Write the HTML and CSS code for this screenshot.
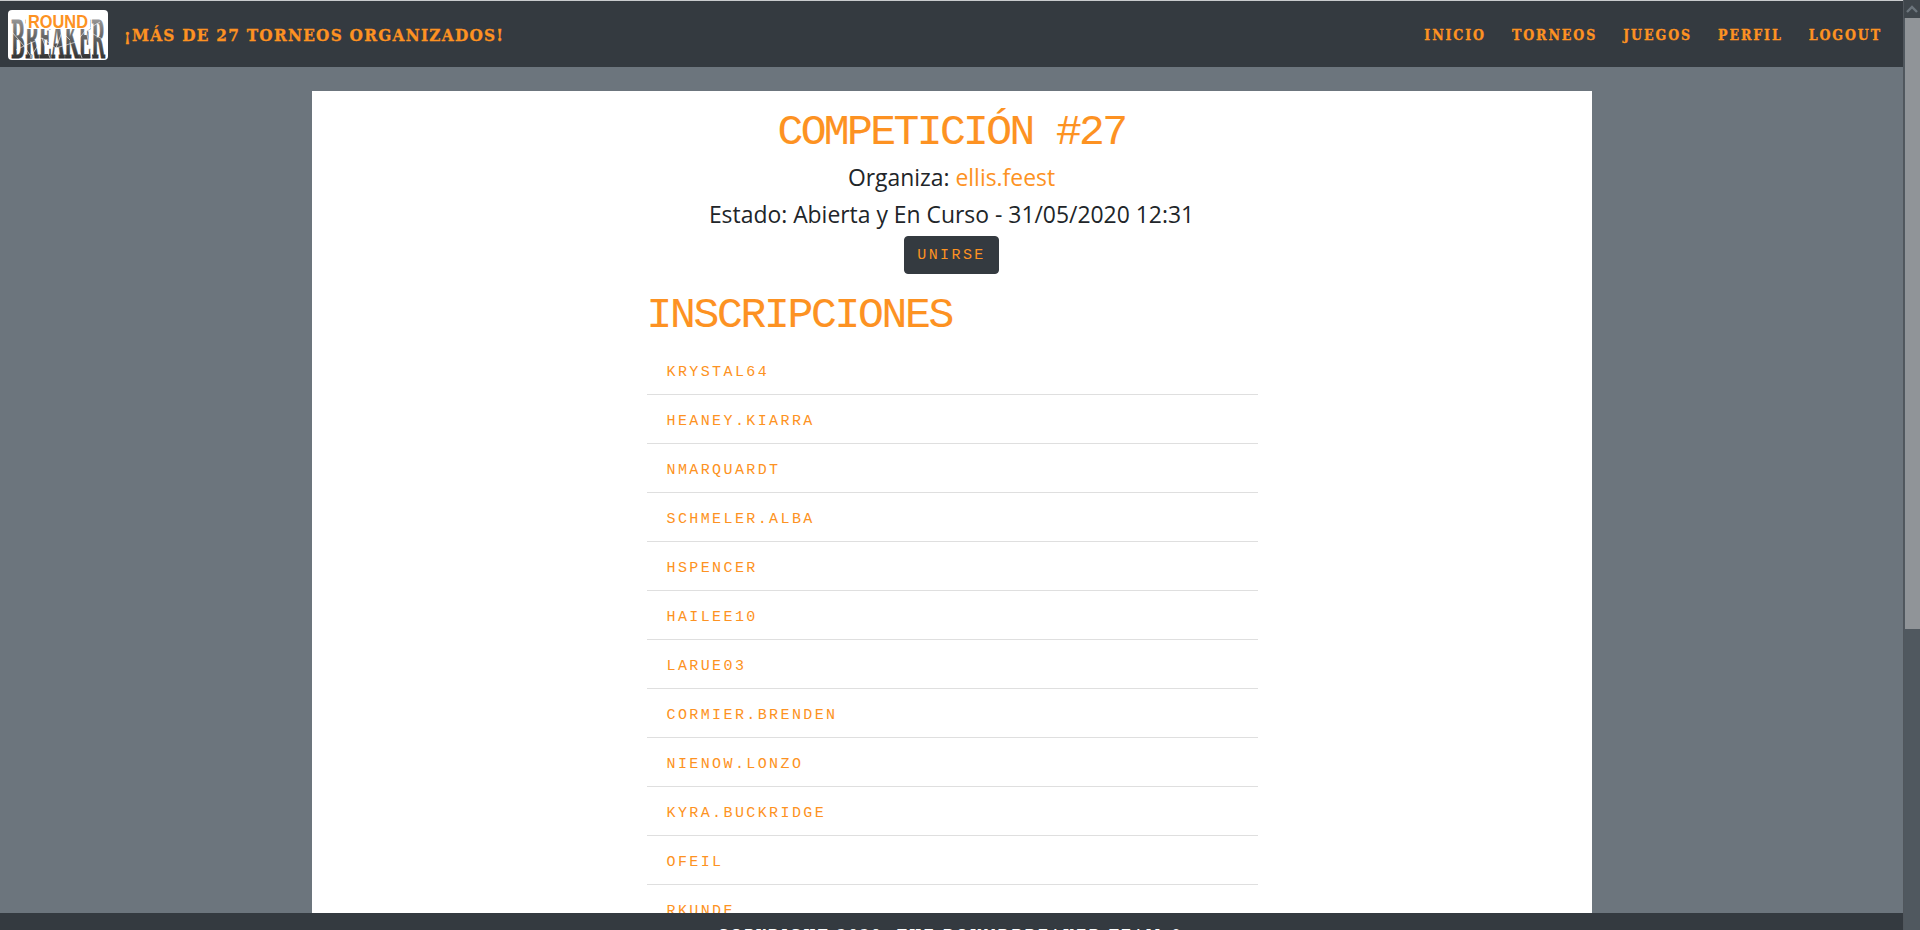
FILE: index.html
```html
<!DOCTYPE html>
<html lang="en">
<head>
    <meta charset="UTF-8">
    <meta name="viewport" content="width=device-width, initial-scale=1.0">
    <title>RoundBreaker</title>
    <link rel="stylesheet" href="styles.css">
</head>
<body>

<div class="page">
    <header class="navbar">
        <a class="brand" href="#">
            <svg class="logo" viewBox="0 0 100 50" width="100" height="50">
                <defs>
                    <linearGradient id="fade" x1="0" y1="0" x2="0" y2="1">
                        <stop offset="0" stop-color="#b4b4b4"/>
                        <stop offset="0.4" stop-color="#6e6e6e"/>
                        <stop offset="1" stop-color="#161616"/>
                    </linearGradient>
                </defs>
                <rect width="100" height="50" rx="4" fill="#fff"/>
                <text class="logo-bottom" transform="translate(3 48) scale(1 1.72)" textLength="94" lengthAdjust="spacingAndGlyphs" fill="url(#fade)">BREAKER</text>
                <path class="cracks" d="M4 22l12 14 8 12M16 36l18-8 8 20M34 28l14 10 6-16M48 38l20-6 6 16M68 32l10-12 6 28M92 12l-14 8 18 10M22 48l10-16M54 22l8 8M8 40l8-4"/>
                <rect x="18" y="0" width="64" height="19" fill="#fff"/>
                <text class="logo-top" x="20" y="17.5" textLength="60" lengthAdjust="spacingAndGlyphs">ROUND</text>
            </svg>
        </a>
        <span class="tagline">¡Más de 27 torneos organizados!</span>
        <nav class="nav-links">
            <a href="#">Inicio</a>
            <a href="#">Torneos</a>
            <a href="#">Juegos</a>
            <a href="#">Perfil</a>
            <a href="#">Logout</a>
        </nav>
    </header>

    <main class="content">
        <div class="card">
            <h1 class="title">Competición #27</h1>
            <p class="info">Organiza: <a href="#">ellis.feest</a></p>
            <p class="info">Estado: Abierta y En Curso - 31/05/2020 12:31</p>
            <button class="join" type="button">Unirse</button>
            <section class="entries">
                <h2>Inscripciones</h2>
                <ul>
                    <li>krystal64</li>
                    <li>heaney.kiarra</li>
                    <li>nmarquardt</li>
                    <li>schmeler.alba</li>
                    <li>hspencer</li>
                    <li>hailee10</li>
                    <li>larue03</li>
                    <li>cormier.brenden</li>
                    <li>nienow.lonzo</li>
                    <li>kyra.buckridge</li>
                    <li>ofeil</li>
                    <li>rkunde</li>
                </ul>
            </section>
        </div>
    </main>

    <footer class="footer">Copyright 2020. The RoundBreaker Team ©</footer>
</div>

<div class="scrollbar">
    <div class="scroll-up"><svg width="12" height="8" viewBox="0 0 12 8"><path d="M1 7l5-5 5 5" fill="none" stroke="#6c757d" stroke-width="2.4"/></svg></div>
    <div class="scroll-thumb"></div>
</div>

</body>
</html>
```

FILE: styles.css
```css
/* Basic Reset */
* {
    margin: 0;
    padding: 0;
    box-sizing: border-box;
}

html,
body {
    height: 100%;
    overflow: hidden;
}

body {
    display: flex;
    font-family: 'Open Sans', sans-serif;
    background: #6c757d;
    color: #212529;
}

a {
    color: #fd9222;
    text-decoration: none;
}

.page {
    flex: 1;
    min-width: 0;
    display: flex;
    flex-direction: column;
    height: 100%;
    position: relative;
}

/* Navbar */
.navbar {
    height: 67px;
    flex-shrink: 0;
    display: flex;
    align-items: center;
    padding: 1px 21px 0 8px;
    background: #343a40;
    border-top: 1px solid #c9cbcd;
}

.brand {
    display: flex;
    margin-right: 16px;
}

.logo-top {
    font-family: 'Liberation Sans', sans-serif;
    font-size: 19px;
    font-weight: bold;
    fill: #fd9222;
}

.logo-bottom {
    font-family: 'DejaVu Serif', serif;
    font-size: 30px;
    font-weight: bold;
    stroke: url(#fade);
    stroke-width: 0.5;
}

.cracks {
    fill: none;
    stroke: #fff;
    stroke-width: 0.6;
}

.tagline {
    font-family: 'DejaVu Serif', serif;
    font-weight: bold;
    font-stretch: condensed;
    font-size: 17px;
    letter-spacing: 1.27px;
    -webkit-text-stroke: 0.3px #fd9222;
    text-transform: uppercase;
    color: #fd9222;
}

.nav-links {
    margin-left: auto;
    display: flex;
    gap: 26px;
}

.nav-links a {
    font-family: 'DejaVu Serif', serif;
    font-weight: bold;
    font-stretch: condensed;
    font-size: 14px;
    letter-spacing: 1.9px;
    -webkit-text-stroke: 0.3px #fd9222;
    text-transform: uppercase;
}

/* Main card */
.content {
    flex: 1;
    min-height: 0;
    overflow: hidden;
    padding-top: 24px;
}

.card {
    width: 1280px;
    min-height: 100%;
    margin: 0 auto;
    background: #fff;
    padding-top: 18px;
    text-align: center;
}

.title {
    font-family: 'Liberation Mono', monospace;
    font-weight: normal;
    font-size: 43px;
    line-height: 48px;
    letter-spacing: -2.6px;
    -webkit-text-stroke: 0.1px #fd9222;
    text-transform: uppercase;
    color: #fd9222;
    margin-bottom: 2px;
}

.info {
    font-size: 22.9px;
    line-height: 37px;
}

.join {
    font-family: 'Liberation Mono', monospace;
    font-size: 15px;
    letter-spacing: 2.4px;
    text-transform: uppercase;
    color: #fd9222;
    background: #343a40;
    border: 1px solid #343a40;
    border-radius: 4px;
    width: 95px;
    height: 38px;
    margin-top: 3px;
    display: block;
    margin-left: auto;
    margin-right: auto;
}

.entries {
    width: 611px;
    margin: 18px 0 0 335px;
    text-align: left;
}

.entries h2 {
    font-family: 'Liberation Mono', monospace;
    font-weight: normal;
    font-size: 43px;
    line-height: 48px;
    letter-spacing: -2.3px;
    -webkit-text-stroke: 0.1px #fd9222;
    text-transform: uppercase;
    color: #fd9222;
    margin-bottom: 6px;
}

.entries ul {
    list-style: none;
}

.entries li {
    font-family: 'Liberation Mono', monospace;
    font-size: 15px;
    line-height: 21px;
    letter-spacing: 2.4px;
    text-transform: uppercase;
    color: #fd9222;
    padding: 16px 20px 11px;
    border-bottom: 1px solid #dfdfdf;
}

/* Footer sits over the list */
.footer {
    position: absolute;
    left: 0;
    right: 0;
    bottom: 0;
    height: 17px;
    overflow: hidden;
    padding-top: 14px;
    background: #343a40;
    color: #fff;
    font-family: 'DejaVu Serif', serif;
    font-weight: bold;
    font-stretch: condensed;
    font-size: 14px;
    line-height: 16px;
    letter-spacing: 2.7px;
    text-transform: uppercase;
    text-align: center;
}

/* Painted scrollbar */
.scrollbar {
    width: 17px;
    flex-shrink: 0;
    display: flex;
    flex-direction: column;
    align-items: center;
    border-left: 1px solid #50565c;
    background: #50585f;
}

.scroll-up {
    height: 18px;
    background: #3f464c;
    width: 100%;
    display: flex;
    align-items: center;
    justify-content: center;
}

.scroll-thumb {
    width: 15px;
    height: 611px;
    background: #909498;
}
```
